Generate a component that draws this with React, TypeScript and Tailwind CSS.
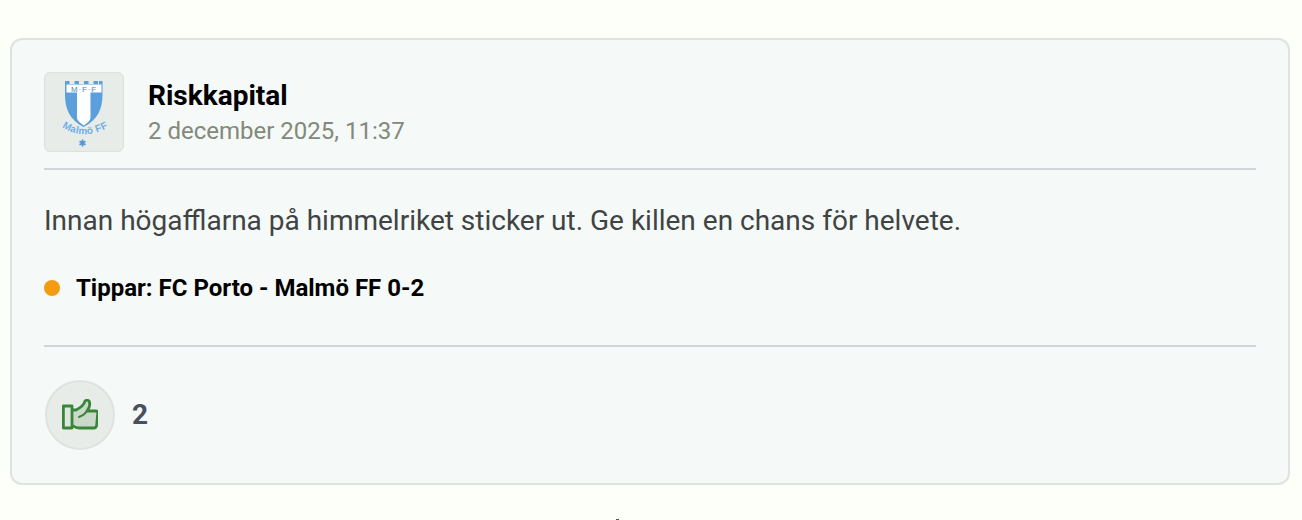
import React from "react";

// Club crest, drawn on a 78x78 box
const ClubLogo = () => (
  <svg width="78" height="78" viewBox="0 0 78 78" className="block">
    <path d="M20 8h4.500v3h5V8h4.500v3h5V8h4.500v3h5V8h4.500v3h1V8h3.500v14c0 14-5 25-19 32C25 47 20 36 20 22z" fill="#5b9fdc" />
    <path d="M21.500 11.500h35v8h-35z" fill="#fff" />
    <path d="M32 19h13.500v26c0 2-2.500 4.500-6.700 7.500C34.500 49.500 32 47 32 45z" fill="#fff" />
    <text x="39" y="18.500" textAnchor="middle" fontSize="8" letterSpacing="0.8" fill="#4a87c0" className="font-['Liberation_Sans',sans-serif]">M·F·F</text>
    <defs>
      <path id="crest-arc" d="M17 54 Q38 68 62 55" />
    </defs>
    <text fontSize="10" fontWeight="700" letterSpacing="0.3" fill="#6fb0e6" className="font-['Liberation_Sans',sans-serif]">
      <textPath href="#crest-arc">Malmö FF</textPath>
    </text>
    <path d="M37.500 66.500v7M34.500 68.200l6 3.600M40.500 68.200l-6 3.600" stroke="#4f97da" strokeWidth="1.800" />
  </svg>
);

const ThumbIcon = () => (
  <svg width="36" height="32" viewBox="0 0 36 32" fill="none" className="block">
    <path d="M9.500 11H14c4-2 8-5 9-9 1-1 3-1 4 0 1 2 1 6-2 10h9c1.200 0 1.800 1.200 1.700 2.500L34.700 26c-.2 2-1.500 3-3 3H17c-3 0-5-1.500-7.500-3z" fill="#cbd9cb" stroke="#38863a" strokeWidth="2.800" strokeLinejoin="round" />
    <path d="M1.400 7H10v22H1.400z" fill="#dfe6df" stroke="#38863a" strokeWidth="2.800" strokeLinejoin="round" />
    <path d="M17 18c3-1 6-3 8-6" stroke="#38863a" strokeWidth="2" strokeLinecap="round" />
  </svg>
);

export default function App() {
  return (
    <div className="h-[520px] overflow-hidden bg-[#fdfff9] pt-[38px] pl-[10px] pr-[12px] font-['Roboto',sans-serif]">
      <div className="h-[447px] rounded-[12px] border-2 border-[#dfe3df] bg-[#f5f9f8] px-[32px] pt-[32px]">
        {/* Header */}
        <div className="flex gap-[24px] border-b-2 border-[#d1d5db] h-[98px]">
          <div className="h-[80px] w-[80px] rounded-[6px] border border-[#dde1dc] bg-[#e8ece9]">
            <ClubLogo />
          </div>
          <div className="flex flex-col pt-[5px]">
            <span className="text-[28px] leading-[38px] font-bold text-black">Riskkapital</span>
            <span className="text-[24px] leading-[32px] text-[#83897a]">2 december 2025, 11:37</span>
          </div>
        </div>

        {/* Post body */}
        <p className="mt-[32px] text-[28px] leading-[38px] text-[#3f4443]">
          Innan högafflarna på himmelriket sticker ut. Ge killen en chans för helvete.
        </p>

        <div className="mt-[32px] flex items-center gap-[16px]">
          <span className="h-[16px] w-[16px] rounded-full bg-[#f39c12]" />
          <span className="text-[24px] leading-[32px] font-bold text-black">Tippar: FC Porto - Malmö FF 0-2</span>
        </div>

        {/* Likes */}
        <div className="mt-[41px] flex items-center gap-[17px] border-t-2 border-[#d1d5db] pt-[33px] pl-[1px]">
          <button className="flex h-[70px] w-[70px] items-center justify-center rounded-full border-2 border-[#dfe3df] bg-[#e8ece9]">
            <ThumbIcon />
          </button>
          <span className="text-[28px] leading-[36px] font-bold text-[#475061]">2</span>
        </div>
      </div>
      <div className="mt-[34px] ml-[606px] h-px w-[3px] bg-[#555]" />
    </div>
  );
}
